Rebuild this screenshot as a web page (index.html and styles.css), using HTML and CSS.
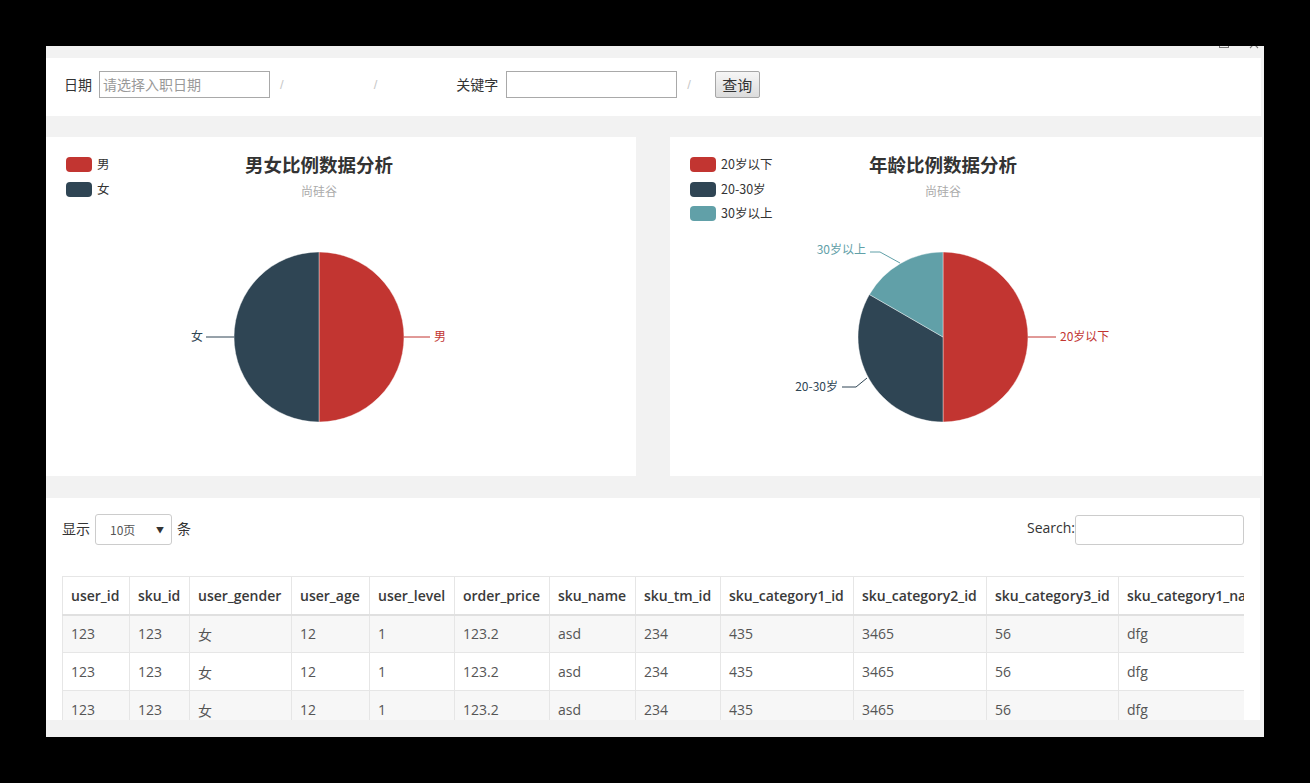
FILE: index.html
```html
<!DOCTYPE html>
<html lang="zh">
<head>
<meta charset="utf-8">
<title>数据分析</title>
<link rel="stylesheet" href="styles.css">
</head>
<body>
<div class="window">
  <div class="titlebar">
    <svg class="ctl ctl-max" width="12" height="12" viewBox="0 0 12 12"><rect x="1.5" y="1.5" width="9" height="8" fill="none" stroke="#777" stroke-width="1"/></svg>
    <svg class="ctl ctl-close" width="12" height="12" viewBox="0 0 12 12"><path d="M2 2 L10 10 M10 2 L2 10" stroke="#777" stroke-width="1.1"/></svg>
  </div>
  <div class="toolbar">
    <span class="lbl">日期</span>
    <input class="inp inp-date" type="text" placeholder="请选择入职日期">
    <span class="slash s1">/</span>
    <span class="slash s2">/</span>
    <span class="lbl lbl-key">关键字</span>
    <input class="inp inp-key" type="text">
    <span class="slash s3">/</span>
    <button class="btn">查询</button>
  </div>
  <div class="charts">
    <div class="card card-left">
      <svg width="590" height="339" viewBox="0 0 590 339" class="chart">
        <rect x="20" y="20" width="26" height="15" rx="4" fill="#c23531"/>
        <text x="51" y="32" class="lg">男</text>
        <rect x="20" y="45" width="26" height="15" rx="4" fill="#2f4554"/>
        <text x="51" y="57" class="lg">女</text>
        <text x="273" y="35" class="title" text-anchor="middle">男女比例数据分析</text>
        <text x="273" y="59" class="sub" text-anchor="middle">尚硅谷</text>
        <path d="M273 200 L273 115 A85 85 0 0 1 273 285 Z" fill="#c23531" stroke="#fff" stroke-width="0.4"/>
        <path d="M273 200 L273 285 A85 85 0 0 1 273 115 Z" fill="#2f4554" stroke="#fff" stroke-width="0.4"/>
        <path d="M358 200 L384 200" stroke="#c23531" stroke-width="1" fill="none"/>
        <text x="388" y="204" class="pl" fill="#c23531">男</text>
        <path d="M188 200 L160 200" stroke="#2f4554" stroke-width="1" fill="none"/>
        <text x="157" y="204" class="pl" fill="#2f4554" text-anchor="end">女</text>
      </svg>
    </div>
    <div class="card card-right">
      <svg width="592" height="339" viewBox="0 0 592 339" class="chart">
        <rect x="20" y="20" width="26" height="15" rx="4" fill="#c23531"/>
        <text x="51" y="32" class="lg">20岁以下</text>
        <rect x="20" y="45" width="26" height="15" rx="4" fill="#2f4554"/>
        <text x="51" y="57" class="lg">20-30岁</text>
        <rect x="20" y="69" width="26" height="15" rx="4" fill="#61a0a8"/>
        <text x="51" y="81" class="lg">30岁以上</text>
        <text x="273" y="35" class="title" text-anchor="middle">年龄比例数据分析</text>
        <text x="273" y="59" class="sub" text-anchor="middle">尚硅谷</text>
        <path d="M273 200 L273 115 A85 85 0 0 1 273 285 Z" fill="#c23531" stroke="#fff" stroke-width="0.4"/>
        <path d="M273 200 L273 285 A85 85 0 0 1 199.4 157.5 Z" fill="#2f4554" stroke="#fff" stroke-width="0.4"/>
        <path d="M273 200 L199.4 157.5 A85 85 0 0 1 273 115 Z" fill="#61a0a8" stroke="#fff" stroke-width="0.4"/>
        <path d="M358 200 L386 200" stroke="#c23531" stroke-width="1" fill="none"/>
        <text x="390" y="204" class="pl" fill="#c23531">20岁以下</text>
        <path d="M197 241 L186 250 L172 250" stroke="#2f4554" stroke-width="1" fill="none"/>
        <text x="168" y="254" class="pl" fill="#2f4554" text-anchor="end">20-30岁</text>
        <path d="M230 126 L210 115 L200 115" stroke="#61a0a8" stroke-width="1" fill="none"/>
        <text x="196" y="117" class="pl" fill="#61a0a8" text-anchor="end">30岁以上</text>
      </svg>
    </div>
  </div>
  <div class="panel">
    <div class="controls">
      <div class="len">
        <span>显示</span>
        <div class="select"><span>10页</span><span class="arrow">▼</span></div>
        <span>条</span>
      </div>
      <div class="search">
        <span>Search:</span>
        <input class="search-inp" type="text">
      </div>
    </div>
    <div class="table-wrap">
      <table class="grid">
        <colgroup>
          <col style="width:67px"><col style="width:60px"><col style="width:102px"><col style="width:78px"><col style="width:85px"><col style="width:95px"><col style="width:86px"><col style="width:85px"><col style="width:133px"><col style="width:133px"><col style="width:132px"><col style="width:160px">
        </colgroup>
        <thead>
          <tr><th>user_id</th><th>sku_id</th><th>user_gender</th><th>user_age</th><th>user_level</th><th>order_price</th><th>sku_name</th><th>sku_tm_id</th><th>sku_category1_id</th><th>sku_category2_id</th><th>sku_category3_id</th><th>sku_category1_name</th></tr>
        </thead>
        <tbody>
          <tr class="odd"><td>123</td><td>123</td><td>女</td><td>12</td><td>1</td><td>123.2</td><td>asd</td><td>234</td><td>435</td><td>3465</td><td>56</td><td>dfg</td></tr>
          <tr><td>123</td><td>123</td><td>女</td><td>12</td><td>1</td><td>123.2</td><td>asd</td><td>234</td><td>435</td><td>3465</td><td>56</td><td>dfg</td></tr>
          <tr class="odd"><td>123</td><td>123</td><td>女</td><td>12</td><td>1</td><td>123.2</td><td>asd</td><td>234</td><td>435</td><td>3465</td><td>56</td><td>dfg</td></tr>
        </tbody>
      </table>
    </div>
  </div>
</div>
</body>
</html>
```

FILE: styles.css
```css
html, body {
  margin: 0;
  padding: 0;
}
body {
  background: #000;
  width: 1310px;
  height: 783px;
  overflow: hidden;
  font-family: "Noto Sans CJK SC", "Liberation Sans", sans-serif;
}
.window {
  margin: 46px 0 0 46px;
  width: 1218px;
  height: 691px;
  background: #f2f2f2;
  overflow: hidden;
  display: flex;
  flex-direction: column;
}
.titlebar {
  height: 12px;
  flex: none;
  display: flex;
  justify-content: flex-end;
  align-items: flex-start;
  gap: 18px;
  padding-right: 4px;
}
.ctl {
  margin-top: -8px;
}
.toolbar {
  box-sizing: border-box;
  height: 58px;
  width: 1215px;
  flex: none;
  background: #fff;
  display: flex;
  align-items: center;
  padding: 0 0 6px 18px;
  font-size: 14px;
  color: #333;
}
.lbl {
  line-height: 20px;
  margin-top: -1px;
}
.inp {
  box-sizing: border-box;
  height: 27px;
  border: 1px solid #a9a9a9;
  padding: 0 3px;
  font-family: "Noto Sans CJK SC", sans-serif;
  font-size: 14px;
  color: #333;
  outline: none;
}
.inp::placeholder {
  color: #999;
}
.inp-date {
  width: 171px;
  margin-left: 7px;
}
.inp-key {
  width: 171px;
  margin-left: 8px;
}
.slash {
  color: #c8c8c8;
  font-family: "Liberation Sans", sans-serif;
  font-size: 13px;
}
.s1 { margin-left: 10px; }
.s2 { margin-left: 90px; }
.lbl-key { margin-left: 79px; }
.s3 { margin-left: 10px; }
.btn {
  margin-left: 24px;
  box-sizing: border-box;
  width: 45px;
  height: 27px;
  border: 1px solid #a6a6a6;
  border-radius: 2px;
  background: linear-gradient(#f6f6f6, #dcdcdc);
  font-family: "Noto Sans CJK SC", sans-serif;
  font-size: 15px;
  color: #333;
  padding: 0;
  line-height: 23px;
}
.charts {
  flex: none;
  margin-top: 21px;
  display: flex;
  gap: 34px;
  height: 339px;
}
.card {
  background: #fff;
  height: 339px;
}
.card-left { width: 590px; }
.card-right { width: 592px; }
.chart {
  display: block;
  font-family: "Noto Sans CJK SC", sans-serif;
}
.lg {
  font-size: 12.5px;
  fill: #333;
}
.title {
  font-size: 18.5px;
  font-weight: 700;
  fill: #333;
}
.sub {
  font-size: 12px;
  fill: #aaaaaa;
}
.pl {
  font-size: 12px;
}
.panel {
  flex: none;
  margin-top: 22px;
  width: 1182px;
  height: 222px;
  background: #fff;
  padding: 0 16px;
  overflow: hidden;
}
.controls {
  display: flex;
  justify-content: space-between;
  align-items: center;
  padding-top: 16px;
  height: 31px;
  font-size: 14px;
  color: #333;
}
.len {
  display: flex;
  align-items: center;
  gap: 5px;
  margin-top: -3px;
}
.len .select {
  margin-top: 3px;
}
.select {
  box-sizing: border-box;
  width: 77px;
  height: 31px;
  border: 1px solid #ccc;
  border-radius: 3px;
  display: flex;
  align-items: center;
  justify-content: space-between;
  padding: 0 7px 0 14px;
  font-size: 12px;
  color: #555;
}
.arrow {
  font-size: 8px;
  color: #333;
}
.search {
  display: flex;
  align-items: center;
  font-family: "Open Sans", sans-serif;
  font-size: 14px;
  color: #333;
}
.search span {
  margin-top: -4px;
}
.search-inp {
  box-sizing: border-box;
  width: 169px;
  height: 30px;
  border: 1px solid #ccc;
  border-radius: 3px;
  outline: none;
}
.table-wrap {
  margin-top: 31px;
  width: 1182px;
  overflow: hidden;
}
.grid {
  table-layout: fixed;
  border-collapse: collapse;
  width: 1216px;
  font-family: "Open Sans", "Noto Sans CJK SC", sans-serif;
  font-size: 14px;
}
.grid th, .grid td {
  height: 38px;
  box-sizing: border-box;
  padding: 0 8px;
  text-align: left;
  white-space: nowrap;
  overflow: hidden;
  border: 1px solid #e6e6e6;
}
.grid th {
  font-weight: 600;
  color: #3a3a3a;
  border-bottom: 2px solid #e0e0e0;
}
.grid td {
  color: #555;
}
.grid tr.odd td {
  background: #f7f7f7;
}
```
